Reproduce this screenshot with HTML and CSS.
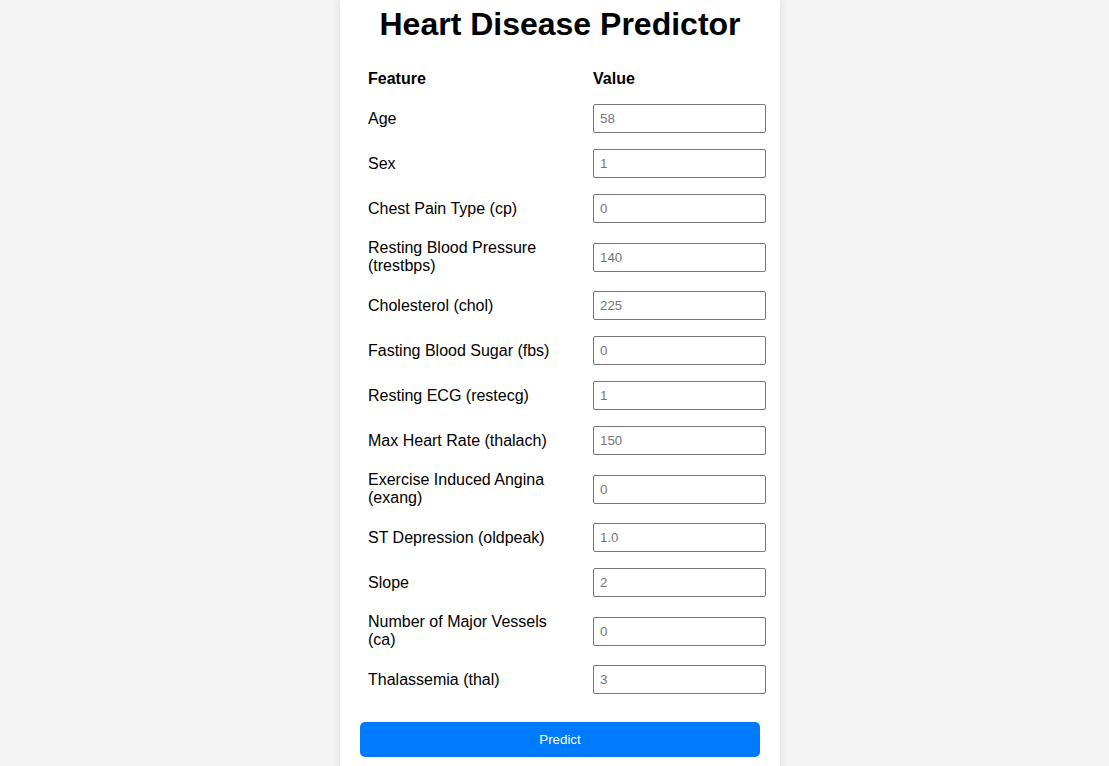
FILE: index.html
```html
<!DOCTYPE html>
<html>
<head>
<meta charset="utf-8">
<title>Heart Disease Predictor</title>
<link rel="stylesheet" href="styles.css">
</head>
<body>
<div class="card">
  <h1 class="title">Heart Disease Predictor</h1>
  <table class="form-table">
    <thead>
      <tr><th class="col-feature">Feature</th><th class="col-value">Value</th></tr>
    </thead>
    <tbody>
      <tr><td>Age</td><td><input class="field" placeholder="58"></td></tr>
      <tr><td>Sex</td><td><input class="field" placeholder="1"></td></tr>
      <tr><td>Chest Pain Type (cp)</td><td><input class="field" placeholder="0"></td></tr>
      <tr><td>Resting Blood Pressure (trestbps)</td><td><input class="field" placeholder="140"></td></tr>
      <tr><td>Cholesterol (chol)</td><td><input class="field" placeholder="225"></td></tr>
      <tr><td>Fasting Blood Sugar (fbs)</td><td><input class="field" placeholder="0"></td></tr>
      <tr><td>Resting ECG (restecg)</td><td><input class="field" placeholder="1"></td></tr>
      <tr><td>Max Heart Rate (thalach)</td><td><input class="field" placeholder="150"></td></tr>
      <tr><td>Exercise Induced Angina (exang)</td><td><input class="field" placeholder="0"></td></tr>
      <tr><td>ST Depression (oldpeak)</td><td><input class="field" placeholder="1.0"></td></tr>
      <tr><td>Slope</td><td><input class="field" placeholder="2"></td></tr>
      <tr><td>Number of Major Vessels (ca)</td><td><input class="field" placeholder="0"></td></tr>
      <tr><td>Thalassemia (thal)</td><td><input class="field" placeholder="3"></td></tr>
    </tbody>
  </table>
  <button class="predict-btn">Predict</button>
</div>
</body>
</html>
```

FILE: styles.css
```css
html, body {
  margin: 0;
  padding: 0;
}
body {
  background: #f4f4f4;
  font-family: "Liberation Sans", Arial, sans-serif;
  color: #000;
  height: 766px;
  overflow: hidden;
  padding-left: 11px;
}
.card {
  width: 400px;
  margin: 0 auto;
  background: #fff;
  padding: 0 20px 40px;
  box-shadow: 0 0 10px rgba(0, 0, 0, 0.1);
}
.title {
  margin: 0;
  padding: 6px 0 19px;
  font-size: 32px;
  font-weight: bold;
  text-align: center;
  line-height: 37px;
}
.form-table {
  border-collapse: collapse;
  table-layout: fixed;
  width: 414px;
}
.col-feature {
  width: 209px;
}
.form-table th,
.form-table td {
  padding: 8px;
  text-align: left;
  font-size: 16px;
  line-height: normal;
  vertical-align: middle;
}
.form-table th {
  font-weight: bold;
}
.field {
  box-sizing: border-box;
  width: 173px;
  height: 29px;
  padding: 6px;
  border: 1px solid #767676;
  border-radius: 2px;
  font-family: "Liberation Sans", Arial, sans-serif;
  font-size: 13.33px;
  display: block;
}
.field::placeholder {
  color: #757575;
}
.predict-btn {
  display: block;
  width: 400px;
  height: 35px;
  margin-top: 20px;
  background: #007bff;
  color: #fff;
  border: none;
  border-radius: 5px;
  font-family: "Liberation Sans", Arial, sans-serif;
  font-size: 13.33px;
}
```
